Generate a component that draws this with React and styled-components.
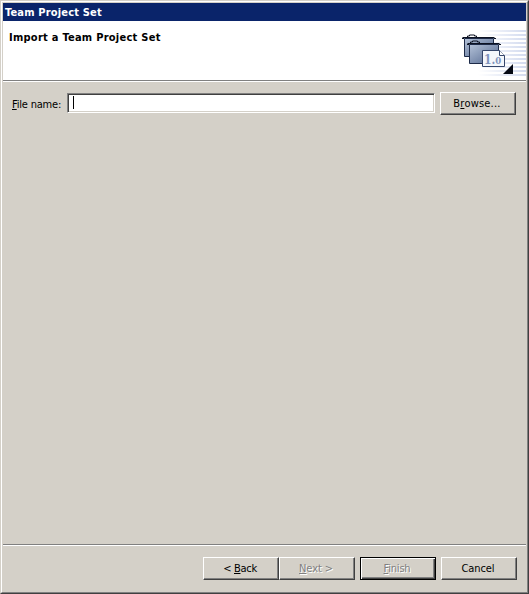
import React from "react";
import styled, { createGlobalStyle } from "styled-components";

const Global = createGlobalStyle`
  * { box-sizing: border-box; }
  body { margin: 0; background: #d4d0c8; }
`;

const Dialog = styled.main`
  width: 529px;
  height: 594px;
  display: flex;
  flex-direction: column;
  background: #d4d0c8;
  border: 1px solid;
  border-color: #d4d0c8 #404040 #404040 #d4d0c8;
  font: 11px/13px "DejaVu Sans Condensed", "DejaVu Sans", sans-serif;
  font-stretch: condensed;
  color: #000;
`;

const Frame = styled.div`
  flex: 1;
  display: flex;
  flex-direction: column;
  border: 1px solid;
  border-color: #fff #808080 #808080 #fff;
  padding: 1px;
`;

const TitleBar = styled.header`
  height: 18px;
  flex: none;
  padding: 3px 2px 0;
  background: #0a246a;
  color: #fff;
  font-weight: bold;
  letter-spacing: 0.17px;
`;

const Banner = styled.section`
  height: 59px;
  flex: none;
  display: flex;
  justify-content: space-between;
  padding-left: 6px;
  background: #fff;
`;

const Heading = styled.h1`
  margin: 10px 0 0;
  font: inherit;
  font-weight: bold;
  letter-spacing: 0.26px;
`;

const Separator = styled.div`
  height: 2px;
  flex: none;
  background: linear-gradient(#808080 50%, #fff 50%);
`;

const Content = styled.section`
  flex: 1;
  padding: 10px 10px 0 9px;
`;

const Field = styled.div`
  display: flex;
  align-items: center;
  height: 23px;
`;

const Label = styled.label`
  width: 55px;
  padding-top: 1px;
  white-space: nowrap;
  letter-spacing: -0.2px;
`;

const TextBox = styled.div`
  width: 368px;
  height: 20px;
  margin: 0 5px 1px 0;
  padding: 1px 3px;
  background: #fff;
  border: 1px solid;
  border-color: #808080 #fff #fff #808080;
  box-shadow: inset 1px 1px #404040, inset -1px -1px #d4d0c8;
`;

const Caret = styled.div`
  width: 1px;
  height: 13px;
  margin: 1px 0 0 2px;
  background: #000;
`;

const Button = styled.button`
  width: 76px;
  height: 23px;
  flex: none;
  padding: 0 2px 1px 0;
  margin: 0 0 0 ${(p) => p.$gap || 0}px;
  font: inherit;
  letter-spacing: ${(p) => p.$tracking || 0}px;
  background: #d4d0c8;
  border: 1px solid;
  border-radius: 0;
  border-color: ${(p) => (p.$default ? "#000" : "#fff #404040 #404040 #fff")};
  box-shadow: ${(p) =>
    p.$default
      ? "inset 1px 1px #fff, inset -1px -1px #404040, inset -2px -2px #808080"
      : "inset -1px -1px #808080"};
  color: ${(p) => (p.disabled ? "#808080" : "#000")};
  text-shadow: ${(p) => (p.disabled ? "1px 1px #fff" : "none")};
`;

const Key = styled.span`
  text-decoration: underline;
  text-decoration-thickness: 1px;
  text-underline-offset: 1px;
`;

const Actions = styled.footer`
  height: 45px;
  flex: none;
  display: flex;
  justify-content: flex-end;
  padding: 11px 9px 0 0;
`;

const Art = styled.svg`
  display: block;
  flex: none;
`;

const stripes = [30, 34, 38, 42, 46, 50, 54, 58, 62, 66, 70, 74];

function ProjectSetArt() {
  return (
    <Art width="76" height="59" viewBox="450 21 76 59">
      <defs>
        <linearGradient id="stripe" gradientUnits="userSpaceOnUse" x1="478" x2="526" y1="0" y2="0">
          <stop offset="0" stopColor="#fff" />
          <stop offset="1" stopColor="#d3dbef" />
        </linearGradient>
        <linearGradient id="folder" x1="0" x2="1" y1="0" y2="1">
          <stop offset="0" stopColor="#b4c2d8" />
          <stop offset="1" stopColor="#4f648c" />
        </linearGradient>
      </defs>
      {stripes.map((y) => (
        <rect key={y} x="478" y={y} width="48" height="2" fill="url(#stripe)" />
      ))}
      <path d="M464.5 38.5h29v18h-29z" fill="url(#folder)" stroke="#1d2a48" />
      <path d="M462 38.5h2M462.5 37.5h32M494 38.5h2M467.5 37v-1h2v-1h5v1h2v1" fill="none" stroke="#0c1222" />
      <path d="M469.5 44.5h29v19h-29z" fill="url(#folder)" stroke="#1d2a48" />
      <path d="M467 44.5h2M467.5 43.5h32M499 44.5h2M470.5 43v-1h2v-1h5v1h2v1" fill="none" stroke="#0c1222" />
      <path d="M482.5 50.5h17l5 5v11h-22z" fill="#f4f7fc" stroke="#35466b" />
      <path d="M499.5 50.5v5h5" fill="#fff" stroke="#35466b" />
      <text x="484" y="64" fontFamily="DejaVu Serif, serif" fontSize="12" fontWeight="bold" fill="#8295bd">
        1.<tspan fontSize="9.5">0</tspan>
      </text>
      <path d="M513 64v10h-10z" fill="#050914" />
    </Art>
  );
}

export default function App() {
  return (
    <>
      <Global />
      <Dialog>
        <Frame>
          <TitleBar>Team Project Set</TitleBar>
          <Banner>
            <Heading>Import a Team Project Set</Heading>
            <ProjectSetArt />
          </Banner>
          <Separator />
          <Content>
            <Field>
              <Label><Key>F</Key>ile name:</Label>
              <TextBox><Caret /></TextBox>
              <Button $tracking={0.2}>B<Key>r</Key>owse...</Button>
            </Field>
          </Content>
          <Separator />
          <Actions>
            <Button $tracking={-0.3}>&lt; <Key>B</Key>ack</Button>
            <Button disabled $tracking={-0.1}><Key>N</Key>ext &gt;</Button>
            <Button disabled $default $gap={5} $tracking={-0.2}><Key>F</Key>inish</Button>
            <Button $gap={5} $tracking={-0.1}>Cancel</Button>
          </Actions>
        </Frame>
      </Dialog>
    </>
  );
}
